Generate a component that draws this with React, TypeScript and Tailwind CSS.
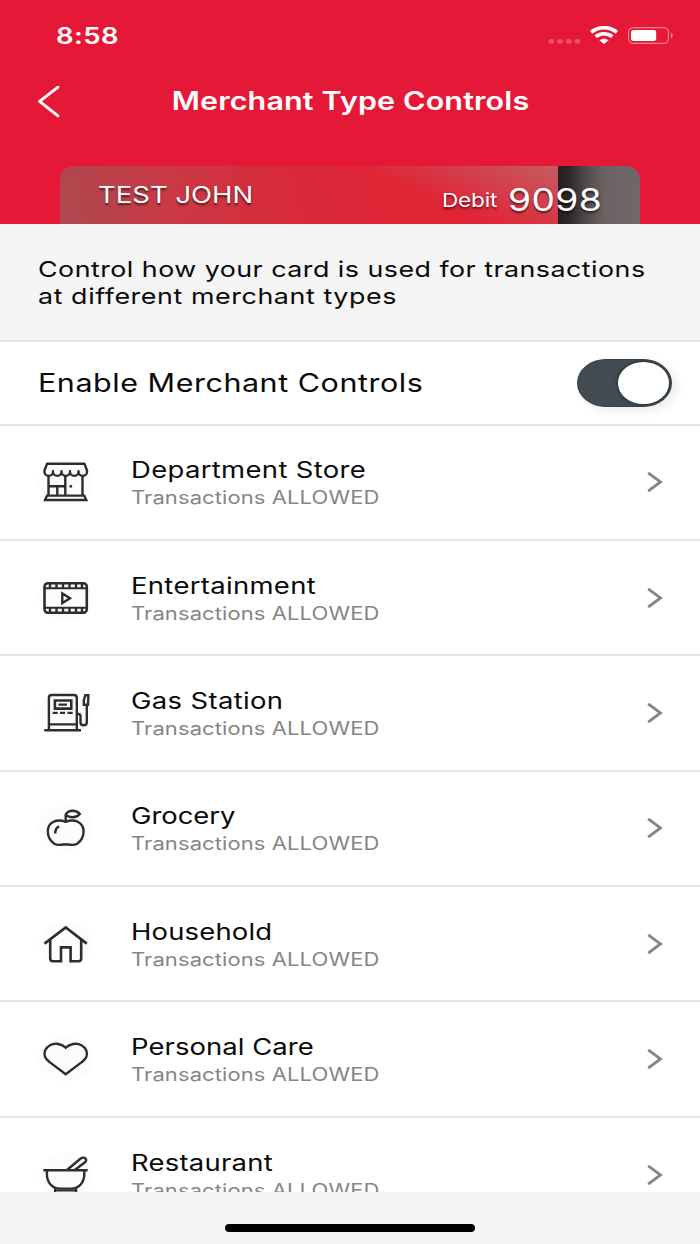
import React from "react";

type TextProps = { className?: string; children: React.ReactNode };

function Wide({ className = "", children }: TextProps) {
  return (
    <span className={`block w-max origin-left scale-x-[1.22] whitespace-nowrap ${className}`}>
      {children}
    </span>
  );
}

function Glyph({ children }: { children: React.ReactNode }) {
  return (
    <svg
      width="60"
      height="50"
      viewBox="0 0 60 50"
      fill="none"
      stroke="#2d2d2d"
      strokeWidth="2.4"
      className="shrink-0"
    >
      <ellipse cx="29.6" cy="25" rx="27.5" ry="22.5" fill="#fcfcfc" stroke="none" />
      {children}
    </svg>
  );
}

const store = (
  <Glyph>
    <path d="M11 6.8H48.5L51 13.5V15A4.2 3.8 0 0 1 42.5 15A4.2 3.8 0 0 1 34 15A4.2 3.8 0 0 1 25.5 15A4.2 3.8 0 0 1 17 15A4.2 3.8 0 0 1 8.5 15V13.5Z" strokeLinejoin="round" />
    <path d="M17 15V13M25.5 15V13M34 15V13M42.5 15V13" strokeWidth="1.8" />
    <path d="M12.5 18V38M46.5 18V38M29.3 18.5V38M12.5 29.3H29.3M21.3 29.3V38" />
    <path d="M11 38.6H48.2L50.3 43H9Z" />
    <path d="M33.5 29.3H36.1" />
  </Glyph>
);

const film = (
  <Glyph>
    <rect x="8.5" y="10.2" width="42.3" height="29.6" rx="3.5" strokeWidth="2.6" />
    <path d="M8.3 15.2H51M8.3 34.8H51" strokeWidth="2" />
    <path d="M14 10V15M20.5 10V15M27 10V15M33.5 10V15M40 10V15M46 10V15M14 34.6V40M20.5 34.6V40M27 34.6V40M33.5 34.6V40M40 34.6V40M46 34.6V40" />
    <path d="M26.3 20.4V30L34 25.2Z" />
  </Glyph>
);

const pump = (
  <Glyph>
    <path d="M12.9 41.5V9.7Q12.9 7 15.7 7H38Q40.8 7 40.8 9.7V41.5M12.7 36.4H41M8.3 42.3H45" />
    <path d="M18.9 12.5H35.3V20.6H18.9Z" strokeWidth="2.6" />
    <path d="M22.5 16.6H31M16.7 24.8H21.7M24 24.8H29M31.5 24.8H36.7" strokeWidth="2.2" />
    <path d="M41 26H42Q44.5 26 44.5 28.2V34.2Q44.5 37.3 47.6 37.3Q50.8 37.3 50.8 34.2V17" />
    <path d="M49.3 7.2H52.4L52 16.8H47.8V12.5Z" />
  </Glyph>
);

const apple = (
  <Glyph>
    <path d="M29.7 18.8C25.5 17.2 21 17 17.5 18.8C13.5 20.8 11.8 24 11.8 28.3C11.8 33 14.4 38 18.2 40.7C21.8 42.9 25.8 41.6 29.7 41.2C33.6 41.6 37.6 42.9 41.2 40.7C45 38 47.6 33 47.6 28.3C47.6 24 45.7 20.8 41.7 18.8C38.2 17 33.9 17.2 29.7 18.8Z" />
    <path d="M29.7 18.5V11.5C32.5 6.5 40 6.5 43.8 11C40 15.6 33 15 29.7 11.5M19.2 30.5C19.2 27 20.2 24.5 23.2 23.3" />
  </Glyph>
);

const house = (
  <Glyph>
    <path d="M8.5 24.6L29.7 8.5L50.8 24.6" strokeWidth="2.6" />
    <path d="M14.2 20.5V39.5Q14.2 42.3 17 42.3H25V28.4H34.6V42.3H42.4Q45.2 42.3 45.2 39.5V20.5" strokeWidth="2.6" />
  </Glyph>
);

const heart = (
  <Glyph>
    <path d="M29.7 13.7C25.8 9.7 19 8.6 14 11.2C9 13.8 7.3 19 9.2 23.2C10.2 25.5 12.1 26.8 14 28.4L29.7 40.3L45.4 28.4C47.3 26.8 49.2 25.5 50.2 23.2C52.1 19 50.4 13.8 45.4 11.2C40.4 8.6 33.6 9.7 29.7 13.7Z" />
  </Glyph>
);

const bowl = (
  <Glyph>
    <path d="M7.3 20.3H51.7M10.9 20.3V24C10.9 32.5 16.2 38.6 24 38.6H35.2C43 38.6 48.3 32.5 48.3 24V20.3" />
    <path d="M31 20L44.7 8.5C46.1 7.4 48.4 7.4 49.5 8.6C50.5 9.8 50.3 11.2 49 12.2L38.8 20" />
    <path d="M19 38V43H40.2V38M19 40.4H40.2" strokeWidth="2" />
  </Glyph>
);

const merchants = [
  { name: "Department Store", icon: store, tracking: "tracking-[0.28px]" },
  { name: "Entertainment", icon: film, tracking: "tracking-[0.26px]" },
  { name: "Gas Station", icon: pump, tracking: "tracking-[0.28px]" },
  { name: "Grocery", icon: apple, tracking: "tracking-[-0.05px]" },
  { name: "Household", icon: house, tracking: "tracking-[0.14px]" },
  { name: "Personal Care", icon: heart, tracking: "tracking-[0.05px]" },
  { name: "Restaurant", icon: bowl, tracking: "tracking-[0.2px]" },
];

function StatusBar() {
  return (
    <div className="flex h-[71px] items-center justify-between pr-[26px] pl-[56px]">
      <Wide className="text-[22.5px] font-semibold tracking-[0.38px]">8:58</Wide>
      <svg width="126" height="20" viewBox="0 0 126 20" fill="none">
        <g fill="#fff" fillOpacity=".25">
          <rect x="0.6" y="13" width="5.6" height="4.8" rx="2" />
          <rect x="9.3" y="13" width="5.6" height="4.8" rx="2" />
          <rect x="18" y="13" width="5.6" height="4.8" rx="2" />
          <rect x="26.6" y="13" width="5.6" height="4.8" rx="2" />
        </g>
        <g stroke="#fff">
          <path d="M43.2 6.3C50.3 0 61.7 0 68.8 6.3" strokeWidth="3.6" />
          <path d="M47.8 10.6C52.5 6.7 59.5 6.7 64.2 10.6" strokeWidth="3.4" />
        </g>
        <path d="M56 18.1L51.4 14.3C54.2 12.2 57.8 12.2 60.6 14.3Z" fill="#fff" />
        <rect x="80.6" y="1.7" width="39.8" height="15.7" rx="4.6" stroke="#fff" strokeOpacity=".45" strokeWidth="1.2" />
        <rect x="83" y="4" width="25.2" height="11" rx="2.5" fill="#fff" />
        <path d="M122.8 6.8C125.3 7.5 125.3 11.5 122.8 12.2Z" fill="#fff" fillOpacity=".5" />
      </svg>
    </div>
  );
}

export default function App() {
  return (
    <main className="flex h-[1244px] w-[700px] flex-col overflow-hidden bg-white font-['Inter',sans-serif] text-[#0a0a0a]">
      <header className="flex h-[223.5px] shrink-0 flex-col bg-[#e51937] text-white">
        <StatusBar />
        <div className="grid h-[61px] grid-cols-[1fr_auto_1fr] items-center pl-[36px]">
          <svg width="26" height="34" viewBox="0 0 26 34" fill="none" stroke="#fff" strokeWidth="2.9" strokeLinecap="round" strokeLinejoin="round">
            <path d="M22 2.2L3.6 16.4L22 30.8" />
          </svg>
          <h1 className="-ml-[35px] flex justify-center pt-[1px]">
            <span className="block scale-x-[1.22] text-[25px] font-semibold tracking-[0.1px] whitespace-nowrap">
              Merchant Type Controls
            </span>
          </h1>
        </div>
        <div className="mx-[60px] mt-auto flex h-[58px] overflow-hidden rounded-t-[14px] bg-[linear-gradient(90deg,rgba(35,31,32,0)_0,rgba(35,31,32,0)_498.5px,#252021_498.5px,#2b2526_508px,#554d4f_528px,#6d6264_545px,#71676a_580px),linear-gradient(24deg,rgba(200,90,97,0)_60%,rgba(198,88,95,0.45)_72%,#c6585f_87%),linear-gradient(78deg,#ad494f_0,#c83a46_18%,#d72b3b_38%,#e12436_60%,#e52338_100%)]">
          <div className="flex w-full items-center justify-between pr-[55px] pl-[38px] [text-shadow:0_1.5px_2px_rgba(0,0,0,0.6)]">
            <Wide className="text-[22.5px] tracking-[0.02px]">TEST JOHN</Wide>
            <div className="flex items-center pt-[10px]">
              <Wide className="mr-[20.5px] text-[18.5px] leading-[40px] tracking-[-0.15px]">Debit</Wide>
              <Wide className="text-[30.5px] leading-[40px] tracking-[0.3px]">9098</Wide>
            </div>
          </div>
        </div>
      </header>

      <section className="h-[118.5px] shrink-0 border-b-2 border-[#e4e4e4] bg-[#f5f5f5] pt-[32px] pl-[38px] text-[22px] leading-[27px]">
        <Wide className="tracking-[0.38px]">Control how your card is used for transactions</Wide>
        <Wide className="tracking-[0.47px]">at different merchant types</Wide>
      </section>

      <section className="flex h-[83.5px] shrink-0 items-center justify-between border-b-2 border-[#e4e4e4] pr-[28px] pl-[37.5px]">
        <Wide className="pt-[1.5px] text-[25px] tracking-[0.43px]">Enable Merchant Controls</Wide>
        <button
          role="switch"
          aria-checked="true"
          aria-label="Enable Merchant Controls"
          className="flex h-[47.5px] w-[95px] items-center justify-end overflow-hidden rounded-[29px/24px] border border-[#36424a] bg-[#414b51] pr-[2.5px] shadow-[5px_4px_10px_rgba(0,0,0,0.08)]"
        >
          <span className="block h-[41.5px] w-[51px] rounded-[50%] bg-white shadow-[0_0_3px_1px_#26323a]" />
        </button>
      </section>

      <ul className="min-h-0 flex-1 overflow-hidden">
        {merchants.map((m) => (
          <li key={m.name} className="flex h-[115.4px] items-center border-b-2 border-[#e4e4e4] pl-[36px]">
            {m.icon}
            <div className="ml-[35px] flex-1 pt-[4px]">
              <Wide className={`text-[22.5px] leading-[28px] ${m.tracking}`}>{m.name}</Wide>
              <Wide className="text-[18px] leading-[28px] tracking-[0.09px] text-[#858585]">Transactions ALLOWED</Wide>
            </div>
            <svg width="18" height="24" viewBox="0 0 18 24" fill="none" stroke="#858585" strokeWidth="2.9" className="mr-[36px]">
              <path d="M2.2 2.8L14.4 11.9L2.2 21.1" />
            </svg>
          </li>
        ))}
      </ul>

      <footer className="flex h-[52.5px] shrink-0 justify-center bg-[#f5f5f5] pt-[32.5px]">
        <div className="h-[7.5px] w-[250px] rounded-full bg-black" />
      </footer>
    </main>
  );
}
